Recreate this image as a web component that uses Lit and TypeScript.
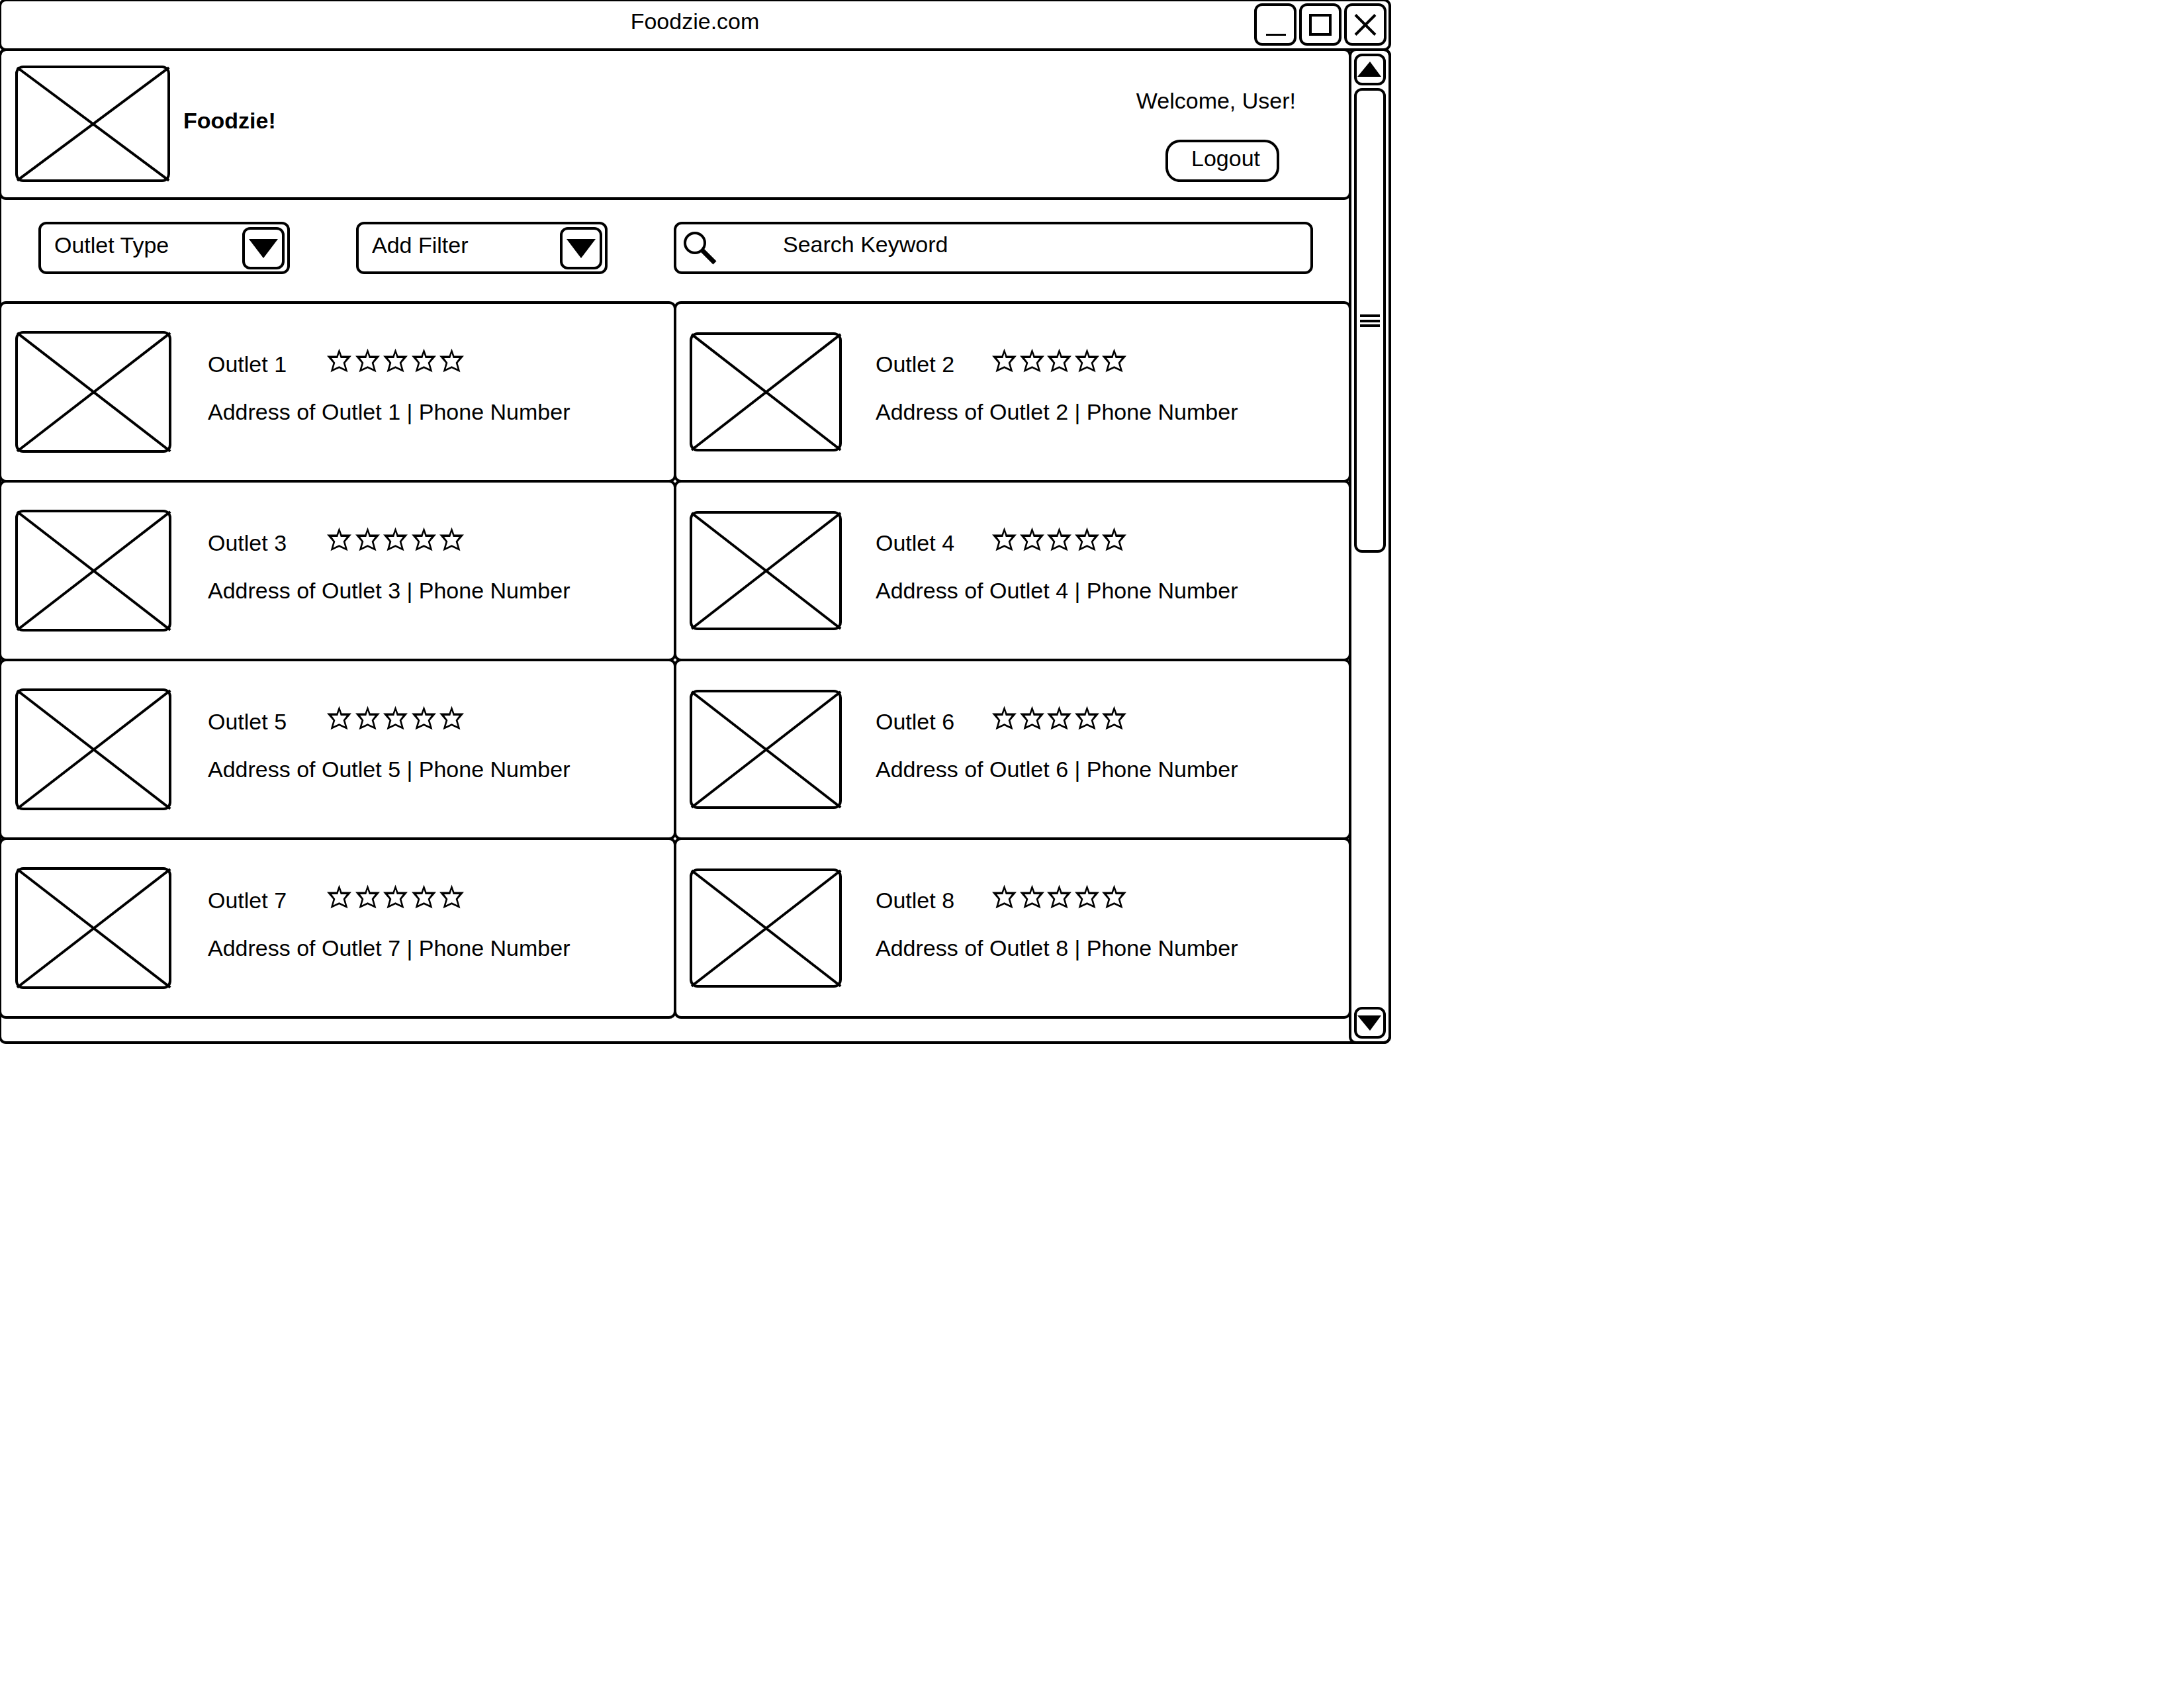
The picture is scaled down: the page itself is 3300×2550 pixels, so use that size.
import { LitElement, html, css, svg } from "lit";
import { customElement, property } from "lit/decorators.js";

interface Outlet {
  name: string;
  address: string;
  phone: string;
}

const outlets: Outlet[] = [1, 2, 3, 4, 5, 6, 7, 8].map((n) => ({
  name: `Outlet ${n}`,
  address: `Address of Outlet ${n}`,
  phone: "Phone Number",
}));

/** Crossed box that stands in for a picture. Its size comes from the parent. */
@customElement("image-placeholder")
export class ImagePlaceholder extends LitElement {
  static styles = css`
    :host {
      display: block;
      flex: none;
    }
    .box {
      box-sizing: border-box;
      display: grid;
      height: 100%;
      border: 4px solid #000;
      border-radius: 12px;
    }
    .cross {
      width: 100%;
      height: 100%;
      overflow: visible;
      stroke: #000;
      stroke-width: 4;
    }
  `;

  render() {
    return html`
      <div class="box" role="img" aria-label="Image">
        <svg class="cross" aria-hidden="true">
          <line x1="-1" y1="-1" x2="101%" y2="101%"></line>
          <line x1="101%" y1="-1" x2="-1" y2="101%"></line>
        </svg>
      </div>
    `;
  }
}

/** Row of five empty stars. */
@customElement("star-rating")
export class StarRating extends LitElement {
  @property({ type: Number }) max = 5;

  static styles = css`
    :host {
      display: block;
    }
    .stars {
      display: flex;
      justify-content: space-between;
    }
    .star {
      display: block;
      width: 37px;
      height: 37px;
    }
  `;

  render() {
    return html`
      <div class="stars" role="img" aria-label="Not rated">
        ${Array.from(
          { length: this.max },
          () => html`
            <svg class="star" viewBox="0 0 38 37" aria-hidden="true">
              <path
                fill-rule="evenodd"
                d="M19 0L23 11.3H38L28.3 22.7L32.3 36.7L19 30.5L5.7 36.7L9.7 22.7L0 11.3H15ZM19 7.5L21.3 15H30.6L25.3 22L28.2 31.8L19 27.4L9.8 31.8L12.7 22L7.4 15H16.7Z"
              ></path>
            </svg>
          `
        )}
      </div>
    `;
  }
}

const triangleDown = svg`<polygon points="1,9 37,9 20,32"></polygon>`;
const triangleUp = svg`<polygon points="1,31 37,31 20,8"></polygon>`;

@customElement("app-root")
export class AppRoot extends LitElement {
  static styles = css`
    :host {
      display: block;
      overflow: hidden;
      background: #fff;
      color: #000;
      font: 34px/40px "Liberation Sans", Arial, sans-serif;
    }
    * {
      box-sizing: border-box;
    }
    button,
    input,
    select {
      margin: 0;
      padding: 0;
      border: 0;
      background: none;
      color: inherit;
      font: inherit;
    }
    h1,
    h2,
    p {
      margin: 0;
      font: inherit;
    }
    svg {
      display: block;
    }

    /* Neighbouring panels share one 4px line, so each overlaps the next by 4px. */
    .panel {
      border: 4px solid #000;
      border-radius: 11px;
    }
    .control {
      border: 4px solid #000;
      border-radius: 12px;
    }

    .window {
      max-width: 2104px;
      margin: -2px 0 0 -2px;
    }

    .titlebar {
      display: grid;
      grid-template-columns: 1fr auto 1fr;
      align-items: center;
      padding: 3px 3px 4px;
    }
    .title {
      grid-column: 2;
      padding-bottom: 10px;
    }
    .window-buttons {
      display: flex;
      justify-content: flex-end;
      gap: 4px;
    }
    .window-button {
      width: 64px;
      height: 64px;
    }
    .window-icon {
      width: 56px;
      height: 56px;
      fill: none;
      stroke: #000;
      stroke-width: 4;
    }

    .frame {
      margin-top: -4px;
    }
    .layout {
      display: grid;
      grid-template-columns: minmax(0, 1fr) 64px;
      margin: -4px;
    }
    .main {
      margin-right: -4px;
      padding-bottom: 42px;
    }

    .header {
      display: flex;
      align-items: center;
      gap: 20px;
      padding: 22px 80px 23px 21px;
    }
    .logo {
      width: 234px;
      height: 176px;
    }
    .brand {
      flex: 1;
      padding-bottom: 10px;
      font-weight: bold;
    }
    .account {
      display: flex;
      flex-direction: column;
      align-items: flex-end;
      align-self: flex-end;
      gap: 39px;
    }
    .logout {
      height: 64px;
      margin-right: 25px;
      padding: 0 25px 8px 35px;
      border: 4px solid #000;
      border-radius: 22px;
    }

    .filters {
      display: grid;
      grid-template-columns: 380px 380px minmax(0, 1fr);
      gap: 100px;
      padding: 33px 58px 41px 60px;
    }
    .picker {
      display: grid;
      grid-template-columns: minmax(0, 1fr) 64px;
      align-items: center;
      padding: 0 4px 0 0;
    }
    .picker-select {
      grid-area: 1 / 1 / 2 / 3;
      height: 71px;
      padding: 0 80px 9px 20px;
      appearance: none;
    }
    .picker-arrow {
      grid-area: 1 / 2;
      height: 64px;
      padding: 8px 6px;
      pointer-events: none;
    }
    .arrow {
      width: 44px;
      height: 40px;
    }
    .search {
      display: flex;
      align-items: center;
      gap: 100px;
      padding-left: 11px;
    }
    .search-icon {
      flex: none;
      width: 50px;
      height: 50px;
      fill: none;
      stroke: #000;
    }
    .search-input {
      flex: 1;
      min-width: 0;
      height: 71px;
      padding-bottom: 10px;
      outline-offset: -4px;
    }
    .search-input::placeholder {
      color: #000;
      opacity: 1;
    }

    .outlets {
      display: grid;
      grid-template-columns: 1fr 1fr;
      margin: 0;
      padding: 0 4px 0 0;
      list-style: none;
    }
    .outlet {
      display: flex;
      align-items: center;
      gap: 55px;
      margin: 0 -4px -4px 0;
      padding: 41px 21px;
    }
    .photo {
      width: 236px;
      height: 184px;
    }
    .details {
      padding-bottom: 16px;
    }
    .heading {
      display: flex;
      align-items: center;
      margin-bottom: 28px;
    }
    .name {
      width: 180px;
    }
    .rating {
      width: 207px;
      padding-bottom: 11px;
    }
    .outlet:nth-child(even) {
      gap: 51px;
      padding: 41px 20px;
    }
    .outlet:nth-child(even) .photo {
      width: 230px;
      height: 180px;
    }
    .outlet:nth-child(even) .name {
      width: 176px;
    }
    .outlet:nth-child(even) .rating {
      width: 203px;
    }

    .scrollbar {
      display: grid;
      grid-template-rows: 48px 29fr 28fr 48px;
      gap: 4px;
      padding: 4px;
    }
    .scroll-down {
      grid-row: 4;
    }
    .scroll-icon {
      width: 40px;
      height: 40px;
    }
    .thumb {
      display: grid;
      place-content: center;
    }
  `;

  private renderPicker(label: string) {
    return html`
      <div class="picker control">
        <select class="picker-select" aria-label=${label}>
          <option>${label}</option>
        </select>
        <span class="picker-arrow control">
          <svg class="arrow" viewBox="0 0 44 40" aria-hidden="true">
            <polygon points="0,6 44,6 22,35"></polygon>
          </svg>
        </span>
      </div>
    `;
  }

  private renderOutlet(outlet: Outlet) {
    return html`
      <li class="outlet panel">
        <image-placeholder class="photo"></image-placeholder>
        <div class="details">
          <div class="heading">
            <h2 class="name">${outlet.name}</h2>
            <star-rating class="rating"></star-rating>
          </div>
          <p>${outlet.address} | ${outlet.phone}</p>
        </div>
      </li>
    `;
  }

  render() {
    return html`
      <div class="window">
        <div class="titlebar panel">
          <div class="title">Foodzie.com</div>
          <div class="window-buttons">
            <button class="window-button control" aria-label="Minimize">
              <svg class="window-icon" viewBox="0 0 56 56" aria-hidden="true">
                <path d="M14 43.5H44" stroke-width="3"></path>
              </svg>
            </button>
            <button class="window-button control" aria-label="Maximize">
              <svg class="window-icon" viewBox="0 0 56 56" aria-hidden="true">
                <rect x="13" y="14" width="30" height="29"></rect>
              </svg>
            </button>
            <button class="window-button control" aria-label="Close">
              <svg class="window-icon" viewBox="0 0 56 56" aria-hidden="true">
                <path d="M13 13.5L43 43.5M43 13.5L13 43.5"></path>
              </svg>
            </button>
          </div>
        </div>

        <div class="frame panel">
          <div class="layout">
            <main class="main">
              <header class="header panel">
                <image-placeholder class="logo"></image-placeholder>
                <h1 class="brand">Foodzie!</h1>
                <div class="account">
                  <p>Welcome, User!</p>
                  <button class="logout">Logout</button>
                </div>
              </header>

              <div class="filters">
                ${this.renderPicker("Outlet Type")}
                ${this.renderPicker("Add Filter")}
                <label class="search control">
                  <svg class="search-icon" viewBox="0 0 50 50" aria-hidden="true">
                    <circle cx="17" cy="17" r="15" stroke-width="4"></circle>
                    <path d="M28 28L47 47" stroke-width="7"></path>
                  </svg>
                  <input
                    class="search-input"
                    type="text"
                    aria-label="Search Keyword"
                    placeholder="Search Keyword"
                  />
                </label>
              </div>

              <ul class="outlets">
                ${outlets.map((outlet) => this.renderOutlet(outlet))}
              </ul>
            </main>

            <div class="scrollbar panel">
              <button class="control" aria-label="Scroll up">
                <svg class="scroll-icon" viewBox="0 0 40 40" aria-hidden="true">
                  ${triangleUp}
                </svg>
              </button>
              <div class="thumb control">
                <svg width="30" height="19" viewBox="0 0 30 19" aria-hidden="true">
                  <path d="M0 0H30V4H0ZM0 8H30V12H0ZM0 15H30V19H0Z"></path>
                </svg>
              </div>
              <button class="scroll-down control" aria-label="Scroll down">
                <svg class="scroll-icon" viewBox="0 0 40 40" aria-hidden="true">
                  ${triangleDown}
                </svg>
              </button>
            </div>
          </div>
        </div>
      </div>
    `;
  }
}
